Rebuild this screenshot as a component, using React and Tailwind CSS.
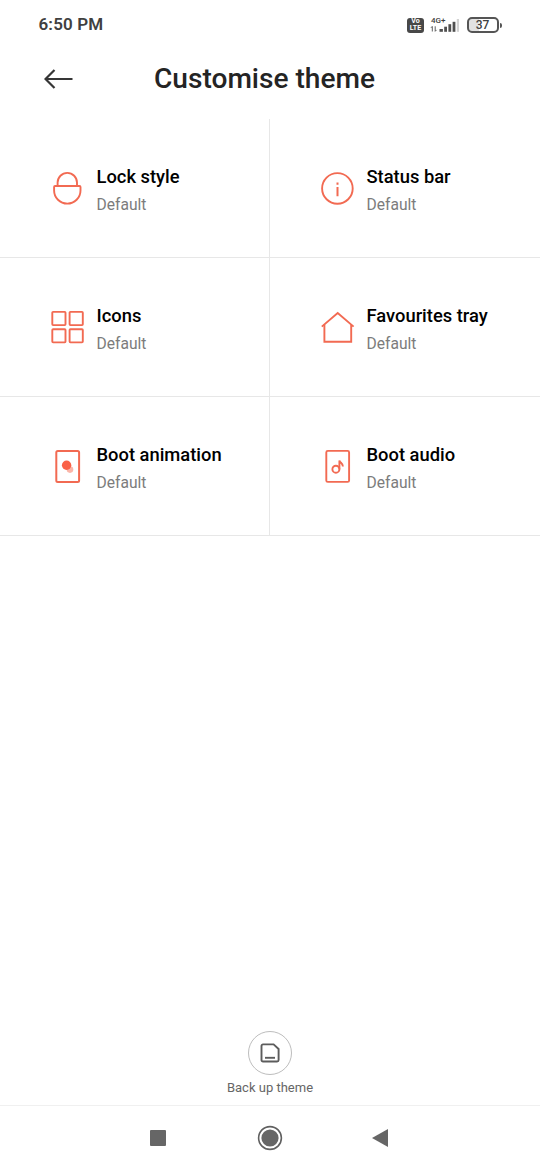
import React from 'react'

const LockIcon = () => (
  <svg width="36" height="36" viewBox="0 0 36 36" fill="none" stroke="#f26a52" strokeWidth="1.9">
    <path d="M8.6 16V12.6a9.7 9.7 0 0 1 19.4 0V16" />
    <path d="M6.1 16h24.4a1 1 0 0 1 1 1v3.4a13.2 13.2 0 0 1-26.4 0V17a1 1 0 0 1 1-1z" />
  </svg>
)

const InfoIcon = () => (
  <svg width="36" height="36" viewBox="0 0 36 36" fill="none" stroke="#f26a52" strokeWidth="1.9">
    <circle cx="18.4" cy="18.4" r="15.3" />
    <path d="M18.5 17v9.3M18.5 12.5v2.2" strokeWidth="2" />
  </svg>
)

const GridIcon = () => (
  <svg width="36" height="36" viewBox="0 0 36 36" fill="none" stroke="#f26a52" strokeWidth="1.9">
    <rect x="3.3" y="2.9" width="13.2" height="13.2" rx="0.8" />
    <rect x="20.6" y="2.9" width="13.2" height="13.2" rx="0.8" />
    <rect x="3.3" y="20.2" width="13.2" height="13.2" rx="0.8" />
    <rect x="20.6" y="20.2" width="13.2" height="13.2" rx="0.8" />
  </svg>
)

const HomeIcon = () => (
  <svg width="36" height="36" viewBox="0 0 36 36" fill="none" stroke="#f26a52" strokeWidth="1.9">
    <path d="M2.8 17.6L18.7 4l15.9 13.6" />
    <path d="M5.4 15.8V32.8H32.2V15.8" />
  </svg>
)

const BootAnimationIcon = () => (
  <svg width="36" height="36" viewBox="0 0 36 36" fill="none">
    <rect x="7.3" y="2.9" width="22.8" height="31" rx="1.5" stroke="#f26a52" strokeWidth="2" />
    <circle cx="21" cy="21.6" r="3.3" fill="#fbb5a8" />
    <circle cx="17.6" cy="17.2" r="4.7" fill="#fa6146" />
  </svg>
)

const BootAudioIcon = () => (
  <svg width="36" height="36" viewBox="0 0 36 36" fill="none" stroke="#f26a52" strokeWidth="1.9">
    <rect x="7.3" y="2.9" width="22.8" height="31" rx="1.5" />
    <circle cx="16.9" cy="21.2" r="3.5" />
    <path d="M20.4 21.2V12.4c.6 2.6 3.5 2.5 3.5 6.2" />
  </svg>
)

const items = [
  { title: 'Lock style', Icon: LockIcon },
  { title: 'Status bar', Icon: InfoIcon },
  { title: 'Icons', Icon: GridIcon },
  { title: 'Favourites tray', Icon: HomeIcon },
  { title: 'Boot animation', Icon: BootAnimationIcon },
  { title: 'Boot audio', Icon: BootAudioIcon },
]

const StatusBar = () => (
  <div className="flex h-12 items-center justify-between pl-[38.5px] pr-[38.5px] pt-0.5">
    <span className="text-[17px] font-semibold tracking-[0.15px] text-[#404040]">6:50 PM</span>
    <div className="flex items-center">
      <div className="flex h-[15px] w-[17px] flex-col items-center justify-center rounded-[3px] bg-[#484848] text-[7px] leading-[7px] font-bold text-white">
        <span>Vo</span>
        <span>LTE</span>
      </div>
      <div className="ml-[7px] flex w-[28.5px] flex-col">
        <span className="text-[8px] leading-[8px] font-medium text-[#404040]">4G+</span>
        <svg width="29" height="9" viewBox="0 0 29 9" fill="none" className="-mt-px overflow-visible">
          <path d="M1.3 7.5V2.5M0 3.8L1.3 2.3M4.2 2.3v5M4.2 7.3L5.5 5.9" stroke="#606060" />
          <g fill="#505050">
            <rect x="8.5" y="5" width="3.4" height="2.8" />
            <rect x="13.2" y="2.7" width="2.8" height="5.1" />
            <rect x="17.4" y="0.2" width="2.8" height="7.6" />
            <rect x="21.6" y="-2.2" width="2.8" height="10" />
          </g>
          <rect x="25.8" y="-5" width="2.2" height="12.8" fill="#d2d2d2" />
        </svg>
      </div>
      <div className="ml-[7px] flex items-center">
        <div className="flex h-4 w-8 items-center justify-center rounded-[5px] border-2 border-[#555] bg-[linear-gradient(90deg,#e2e2e2_35%,#fff_35%)] text-[12px] leading-none font-medium text-[#404040]">
          37
        </div>
        <div className="ml-px h-[5px] w-[2px] rounded-r bg-[#555]" />
      </div>
    </div>
  </div>
)

const ThemeItem = ({ title, Icon }) => (
  <div className="flex h-[139px] items-center border-b border-[#e7e7e7] pl-[49px] odd:border-r">
    <Icon />
    <div className="ml-[11.5px] pt-[6px]">
      <p className="text-[18.35px] leading-6 font-medium text-black">{title}</p>
      <p className="mt-1 text-[15.6px] leading-6 text-[#7c7c7c]">Default</p>
    </div>
  </div>
)

export default function App() {
  return (
    <div className="flex h-[1170px] w-[540px] flex-col bg-white font-['Roboto',sans-serif]">
      <StatusBar />

      <header className="flex h-[71px] items-start pl-11">
        <svg width="30" height="22" viewBox="0 0 30 22" fill="none" stroke="#363636" strokeWidth="2.2" className="mt-5">
          <path d="M28.5 11H1.5M10.5 2L1.5 11l9 9" />
        </svg>
        <h1 className="ml-20 mt-[13px] text-[28.1px] leading-9 font-medium text-[#242424]">Customise theme</h1>
      </header>

      <main className="grid grid-cols-2">
        {items.map(item => <ThemeItem key={item.title} {...item} />)}
      </main>

      {/* Backup action */}
      <div className="mt-auto flex flex-col items-center pb-[9px]">
        <button className="flex size-11 items-center justify-center rounded-full border border-[#bdbdbd]">
          <svg width="20" height="20" viewBox="0 0 20 20" fill="none" stroke="#5c5c5c" strokeWidth="1.9">
            <path d="M3 1.4h10.6L18.6 6v11a1.5 1.5 0 0 1-1.5 1.5H3A1.5 1.5 0 0 1 1.5 17V2.9A1.5 1.5 0 0 1 3 1.4z" />
            <path d="M5 14.8h10" />
          </svg>
        </button>
        <span className="mt-[5px] text-[13px] leading-4 text-[#666]">Back up theme</span>
      </div>

      {/* System navigation */}
      <nav className="flex h-[65px] items-center justify-between border-t border-[#f0f0f0] pb-px pl-[150px] pr-[152px]">
        <div className="size-4 rounded-[1px] bg-[#666]" />
        <svg width="26" height="26" viewBox="0 0 26 26" fill="none" className="ml-0.5">
          <circle cx="13" cy="13" r="11.4" stroke="#606060" strokeWidth="1.6" />
          <circle cx="13" cy="13" r="8.6" fill="#666" />
        </svg>
        <svg width="16" height="18" viewBox="0 0 16 18">
          <path d="M0 9L16 0v18z" fill="#666" />
        </svg>
      </nav>
    </div>
  )
}
